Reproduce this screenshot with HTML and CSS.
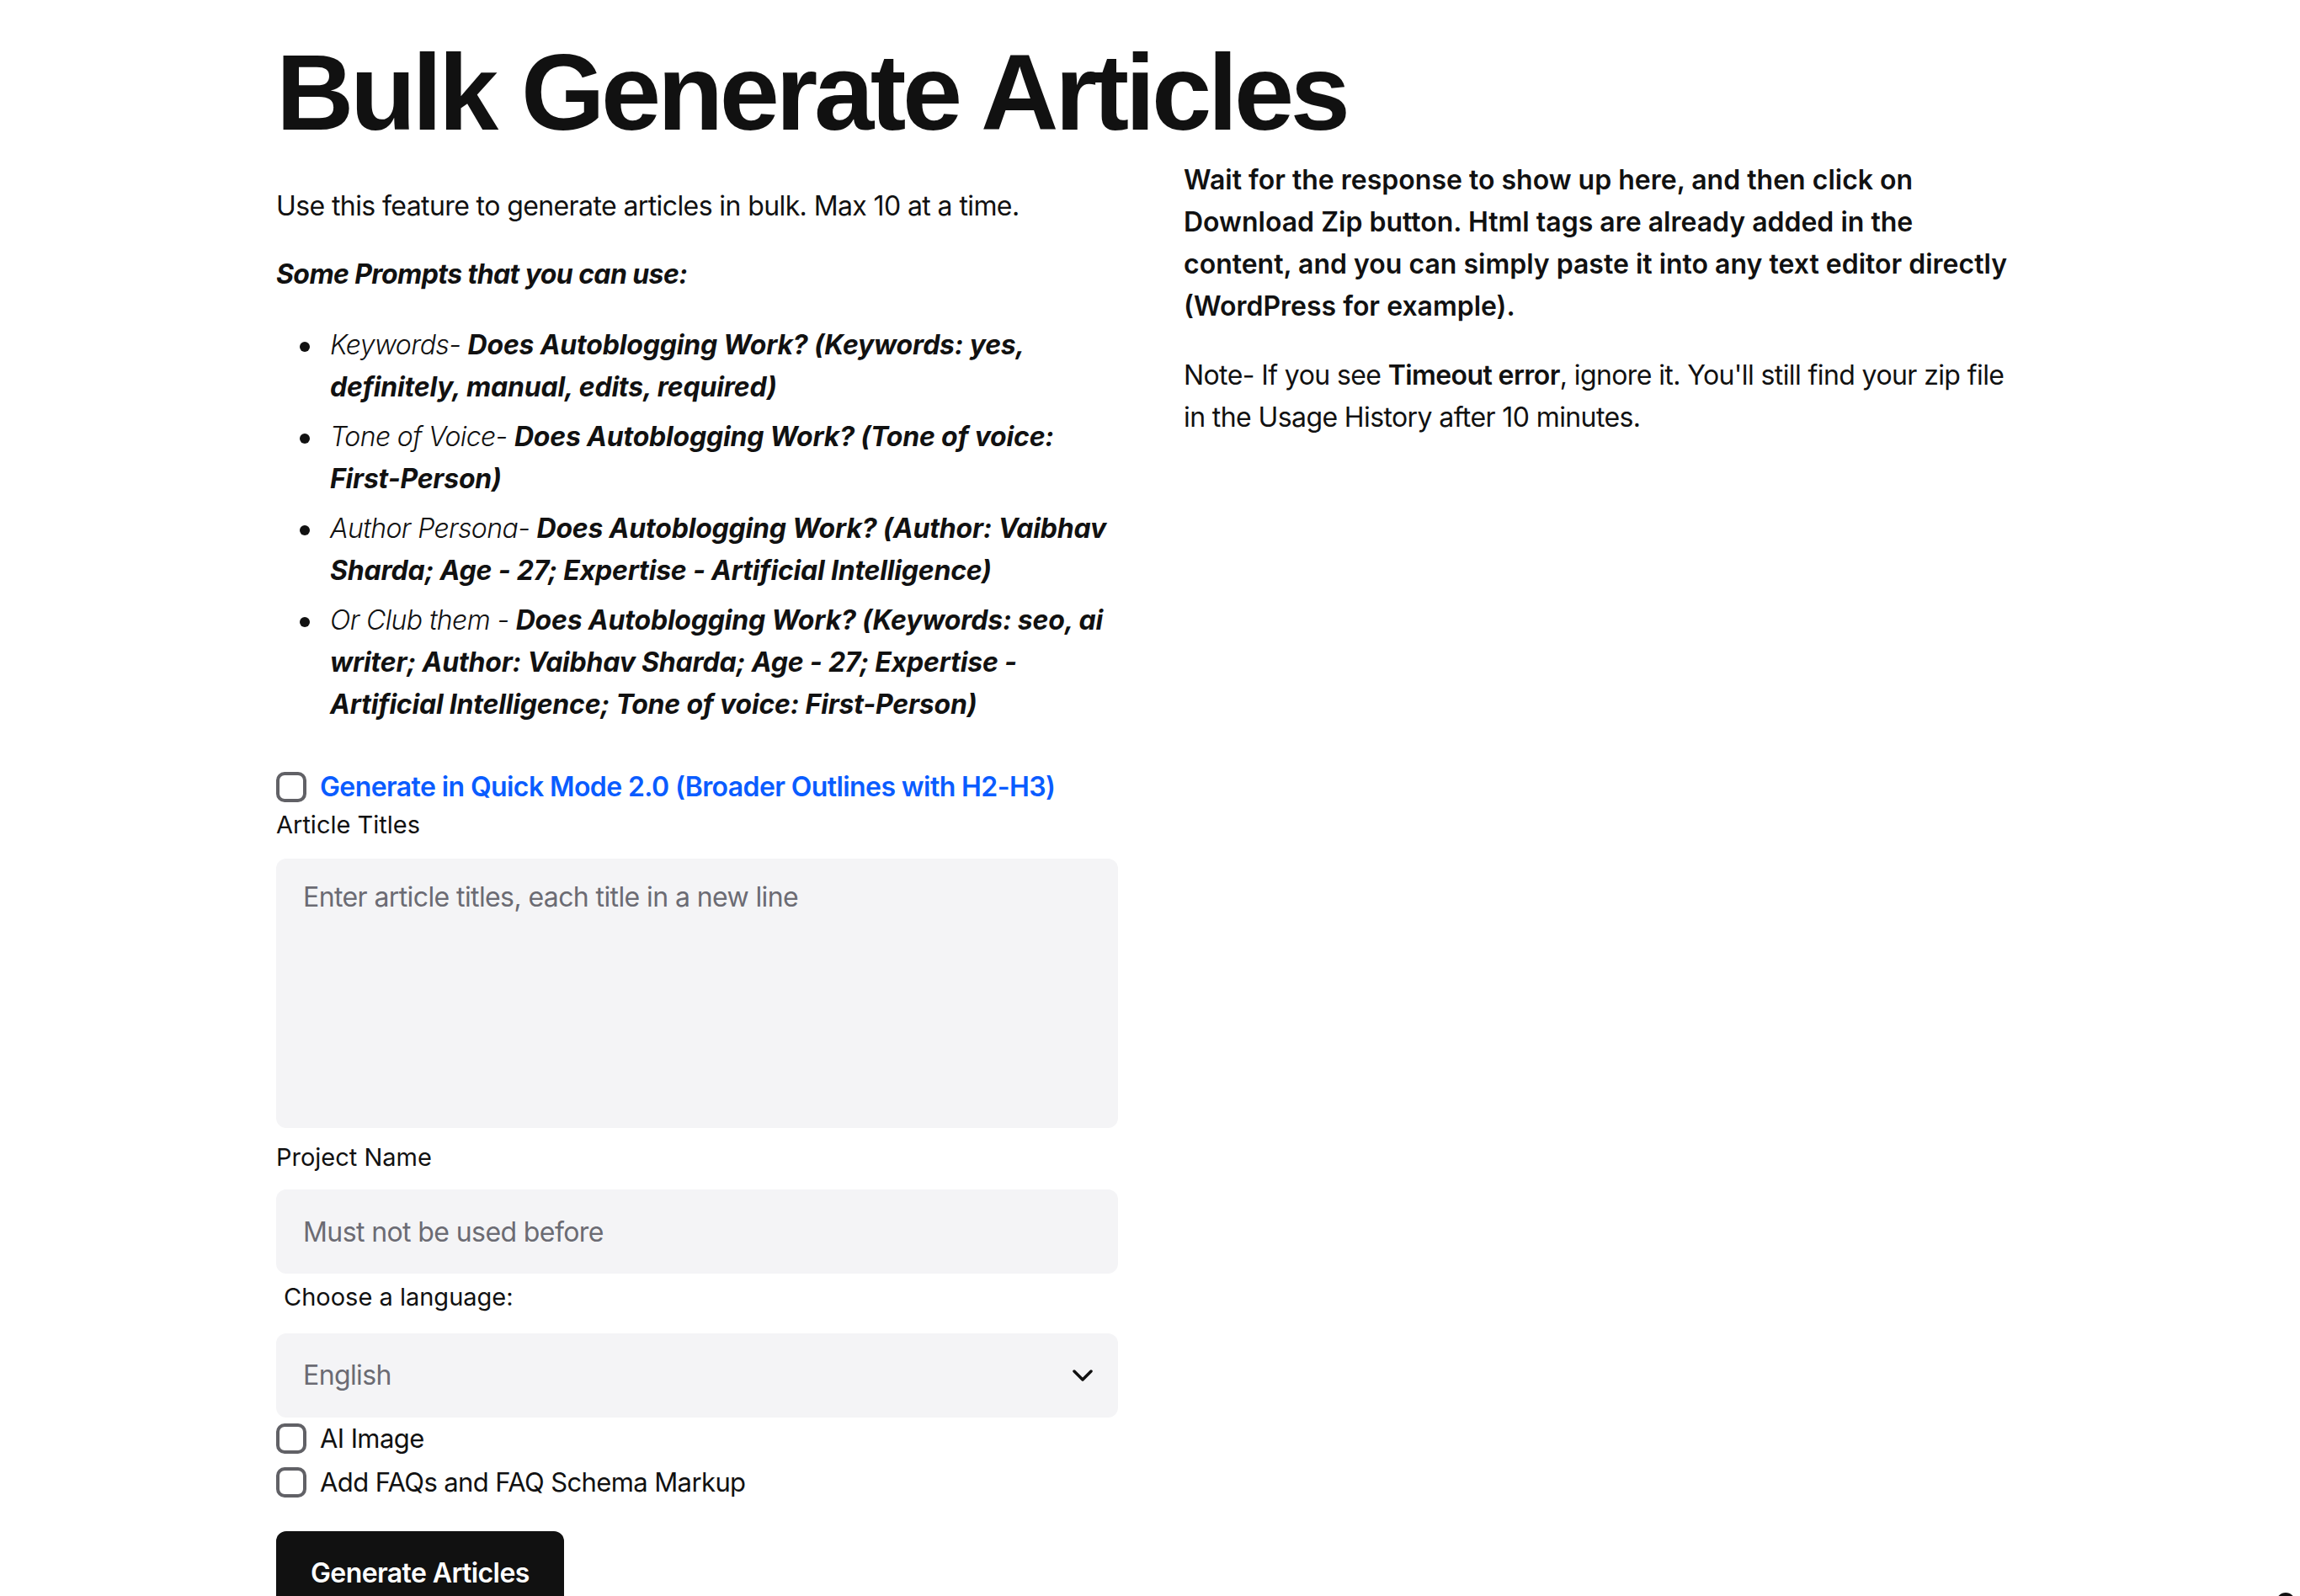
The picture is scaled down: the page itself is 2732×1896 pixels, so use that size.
FILE: index.html
```html
<!DOCTYPE html>
<html lang="en">
<head>
  <meta charset="UTF-8">
  <meta name="viewport" content="width=device-width, initial-scale=1.0">
  <title>Bulk Generate Articles</title>
  <link rel="stylesheet" href="styles.css">
</head>
<body>
  <div class="page">
    <h1>Bulk Generate Articles</h1>

    <div class="columns">
      <!-- форма -->
      <div class="left">
        <p class="intro">Use this feature to generate articles in bulk. Max 10 at a time.</p>
        <p class="prompts-title"><b><i>Some Prompts that you can use:</i></b></p>
        <ul class="prompts">
          <li><i>Keywords- <b>Does Autoblogging Work? (Keywords: yes, definitely, manual, edits, required)</b></i></li>
          <li><i>Tone of Voice- <b>Does Autoblogging Work? (Tone of voice: First-Person)</b></i></li>
          <li><i>Author Persona- <b>Does Autoblogging Work? (Author: Vaibhav Sharda; Age - 27; Expertise - Artificial Intelligence)</b></i></li>
          <li><i>Or Club them - <b>Does Autoblogging Work? (Keywords: seo, ai writer; Author: Vaibhav Sharda; Age - 27; Expertise - Artificial Intelligence; Tone of voice: First-Person)</b></i></li>
        </ul>

        <form id="bulk-form">
          <label class="check quick">
            <input type="checkbox" name="quick_mode">
            <span>Generate in Quick Mode 2.0 (Broader Outlines with H2-H3)</span>
          </label>

          <label class="field-label" for="titles">Article Titles</label>
          <textarea id="titles" name="titles" placeholder="Enter article titles, each title in a new line"></textarea>

          <label class="field-label project-label" for="project">Project Name</label>
          <input type="text" id="project" name="project" class="text-input" placeholder="Must not be used before">

          <label class="field-label lang-label" for="language">Choose a language:</label>
          <div class="select-wrap">
            <select id="language" name="language">
              <option>English</option>
              <option>Spanish</option>
              <option>French</option>
              <option>German</option>
            </select>
            <svg class="chevron" width="24" height="14" viewBox="0 0 24 14" fill="none">
              <path d="M2 2l10 10L22 2" stroke="#111" stroke-width="3.5" stroke-linecap="round" stroke-linejoin="round"/>
            </svg>
          </div>

          <label class="check first">
            <input type="checkbox" name="ai_image">
            <span>AI Image</span>
          </label>
          <label class="check">
            <input type="checkbox" name="faq">
            <span>Add FAQs and FAQ Schema Markup</span>
          </label>

          <button class="generate-button" type="submit">Generate Articles</button>
        </form>
      </div>

      <!-- відповідь -->
      <div class="right">
        <p class="wait"><b>Wait for the response to show up here, and then click on Download Zip button. Html tags are already added in the<br>content, and you can simply paste it into any text editor directly (WordPress for example).</b></p>
        <p class="note">Note- If you see <b>Timeout error</b>, ignore it. You'll still find your zip file in the Usage History after 10 minutes.</p>
        <div id="response"></div>
      </div>
    </div>
  </div>

  <div class="chat-bubble"></div>

  <script>
    document.getElementById('bulk-form').addEventListener('submit', (event) => {
      event.preventDefault();
    });
  </script>
</body>
</html>
```

FILE: styles.css
```css
body {
  font-family: Inter, "Noto Sans", sans-serif;
  color: #111111;
  background: #ffffff;
  margin: 0;
  padding: 0;
  font-size: 32px;
  line-height: 50px;
  letter-spacing: -0.6px;
}
.page {
  width: 2076px;
  margin: 0 auto;
}
h1 {
  font-family: "Liberation Sans", Arial, sans-serif;
  font-size: 128px;
  line-height: 128px;
  font-weight: 700;
  letter-spacing: -4.4px;
  margin: 46px 0 12px;
}
.columns {
  display: grid;
  grid-template-columns: 1000px 1000px;
  gap: 76px;
}
p {
  margin: 0;
}
.intro {
  margin-top: 34px;
}
.prompts-title {
  margin-top: 31px;
}
.prompts {
  margin: 34px 0 0;
  padding-left: 64px;
  list-style: none;
}
.prompts li {
  margin-top: 9px;
}
.prompts li::before {
  content: "";
  display: inline-block;
  width: 12px;
  height: 12px;
  border-radius: 50%;
  background: #111111;
  margin-left: -36px;
  margin-right: 24px;
  vertical-align: middle;
}
.prompts li:first-child {
  margin-top: 0;
}
.prompts i {
  font-weight: 300;
}
.prompts b {
  font-weight: 700;
  letter-spacing: -0.2px;
}
b {
  font-weight: 600;
}
.prompts-title b {
  font-weight: 700;
}
.right {
  padding-top: 3px;
  padding-left: 2px;
}
.wait b {
  letter-spacing: 0;
}
form {
  margin-top: 48px;
  display: flex;
  flex-direction: column;
  align-items: flex-start;
}
.check {
  display: flex;
  align-items: center;
  gap: 16px;
  height: 50px;
  cursor: pointer;
}
.check span {
  font-size: 31px;
}
.check input {
  appearance: none;
  -webkit-appearance: none;
  width: 36px;
  height: 36px;
  margin: 0;
  border: 4.5px solid #616166;
  border-radius: 10px;
  background: #ffffff;
  box-sizing: border-box;
}
.check input:checked {
  background: #0a5cff;
  border-color: #0a5cff;
}
.check.quick span {
  color: #0a5cff;
  font-weight: 600;
  font-size: 32px;
}
.check + .check {
  margin-top: 2px;
}
.field-label {
  font-size: 29px;
  line-height: 40px;
  letter-spacing: 0;
}
.project-label {
  margin-top: 15px;
}
.lang-label {
  margin-top: 8px;
  margin-left: 9px;
}
textarea, .text-input, select {
  width: 100%;
  box-sizing: border-box;
  border: none;
  border-radius: 12px;
  background-color: #f4f4f6;
  font-family: inherit;
  font-size: 32px;
  line-height: 50px;
  letter-spacing: -0.6px;
  color: #111111;
  padding: 0 32px;
  outline: none;
}
textarea {
  margin-top: 20px;
  height: 320px;
  padding-top: 21px;
  padding-bottom: 18px;
  resize: none;
}
.text-input {
  margin-top: 18px;
  height: 100px;
}
textarea::placeholder, .text-input::placeholder {
  color: #6b6b73;
}
.select-wrap {
  position: relative;
  width: 100%;
  margin-top: 23px;
}
select {
  appearance: none;
  -webkit-appearance: none;
  height: 100px;
  color: #6b6b73;
  display: block;
}
.chevron {
  position: absolute;
  right: 30px;
  top: 43px;
  pointer-events: none;
}
.generate-button {
  margin-top: 33px;
  background-color: #111111;
  color: #ffffff;
  font-family: inherit;
  font-size: 32px;
  font-weight: 600;
  line-height: 50px;
  letter-spacing: -0.6px;
  padding: 25px 41px;
  border: none;
  border-radius: 12px;
  cursor: pointer;
}
.generate-button:hover {
  background-color: #333333;
}
.note {
  margin-top: 32px;
}
.chat-bubble {
  position: fixed;
  right: 6px;
  bottom: -18px;
  width: 22px;
  height: 22px;
  border-radius: 50%;
  background: #111111;
}
```
